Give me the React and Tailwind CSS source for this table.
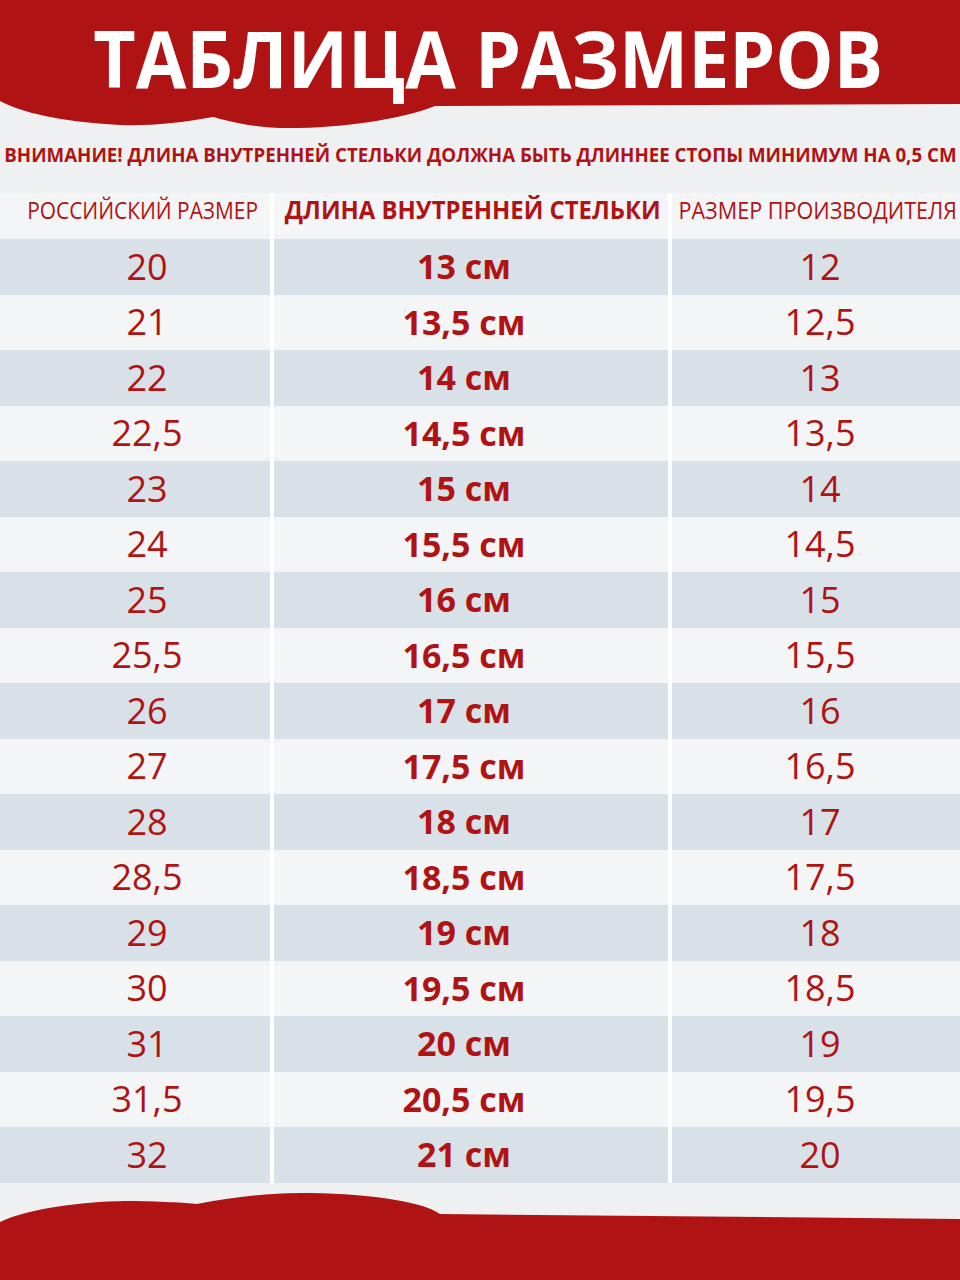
import React from "react";

const rows = [
  ["20", "13 см", "12"],
  ["21", "13,5 см", "12,5"],
  ["22", "14 см", "13"],
  ["22,5", "14,5 см", "13,5"],
  ["23", "15 см", "14"],
  ["24", "15,5 см", "14,5"],
  ["25", "16 см", "15"],
  ["25,5", "16,5 см", "15,5"],
  ["26", "17 см", "16"],
  ["27", "17,5 см", "16,5"],
  ["28", "18 см", "17"],
  ["28,5", "18,5 см", "17,5"],
  ["29", "19 см", "18"],
  ["30", "19,5 см", "18,5"],
  ["31", "20 см", "19"],
  ["31,5", "20,5 см", "19,5"],
  ["32", "21 см", "20"],
];

export default function App() {
  return (
    <div
      className="relative w-[960px] h-[1280px] overflow-hidden bg-[#eef0f2] flex flex-col"
      style={{ fontFamily: '"Open Sans", "Noto Sans", sans-serif' }}
    >
      {/* Header */}
      <div className="relative h-[130px] shrink-0">
        <svg className="absolute inset-0" width="960" height="130" viewBox="0 0 960 130">
          <path
            d="M0 0 H960 V104 L435 106 C400 120 340 128 290 128 C250 128 225 120 213 117 C180 123 150 126 120 125 C60 122 20 112 0 101 Z"
            fill="#b01313"
          />
        </svg>
        <div className="relative flex justify-center pt-[19px] pl-[17px]">
          <h1 className="inline-block scale-x-[0.94] text-white font-bold text-[78px] leading-none whitespace-nowrap">
            ТАБЛИЦА РАЗМЕРОВ
          </h1>
        </div>
      </div>

      {/* Warning */}
      <div className="flex justify-center mt-[16px]">
        <p className="inline-block scale-x-[0.985] text-[#b01313] font-bold text-[19px] leading-none whitespace-nowrap">
          ВНИМАНИЕ! ДЛИНА ВНУТРЕННЕЙ СТЕЛЬКИ ДОЛЖНА БЫТЬ ДЛИННЕЕ СТОПЫ МИНИМУМ НА 0,5 СМ
        </p>
      </div>

      {/* Table */}
      <div className="mt-[28px] grid grid-cols-[270px_394px_288px] gap-x-[4px] bg-white">
        <div className="h-[46px] bg-[#f3f5f7] flex items-center justify-center pl-[15px] pb-[12px] text-[#b01313] text-[24px] whitespace-nowrap">
          <span className="inline-block scale-x-[0.87]">РОССИЙСКИЙ РАЗМЕР</span>
        </div>
        <div className="h-[46px] bg-[#f3f5f7] flex items-center justify-center pl-[3px] pb-[12px] text-[#b01313] text-[25px] font-bold whitespace-nowrap">
          <span className="inline-block scale-x-[0.955]">ДЛИНА ВНУТРЕННЕЙ СТЕЛЬКИ</span>
        </div>
        <div className="h-[46px] bg-[#f3f5f7] flex items-center justify-center pl-[3px] pb-[12px] text-[#b01313] text-[24px] whitespace-nowrap">
          <span className="inline-block scale-x-[0.9]">РАЗМЕР ПРОИЗВОДИТЕЛЯ</span>
        </div>
        {rows.map((r, i) => {
          const bg = i % 2 === 0 ? "bg-[#d9e1e8]" : "bg-[#f3f5f7]";
          return (
            <React.Fragment key={i}>
              <div className={`h-[55.5px] ${bg} flex items-center justify-center pl-[24px] text-[#b01313] text-[36px] font-stretch-90%`}>
                {r[0]}
              </div>
              <div className={`h-[55.5px] ${bg} flex items-center justify-center pr-[14px] text-[#b01313] text-[34px] font-bold`}>
                {r[1]}
              </div>
              <div className={`h-[55.5px] ${bg} flex items-center justify-center pl-[8px] text-[#b01313] text-[36px] font-stretch-90%`}>
                {r[2]}
              </div>
            </React.Fragment>
          );
        })}
      </div>

      {/* Footer wave */}
      <div className="relative flex-1">
        <svg className="absolute left-0 bottom-0" width="960" height="90" viewBox="0 1190 960 90">
          <path
            d="M0 1222 C30 1208 80 1202 125 1201 C160 1201 185 1203 197 1204 C230 1198 265 1193 300 1193 C360 1193 420 1200 440 1214 L960 1219 V1280 H0 Z"
            fill="#b01313"
          />
        </svg>
      </div>
    </div>
  );
}
